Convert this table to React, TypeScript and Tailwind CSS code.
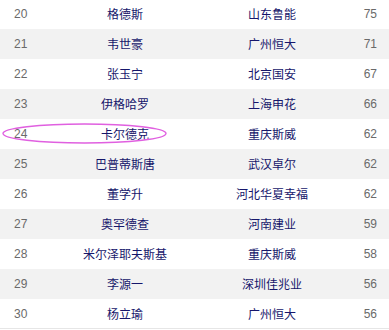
import React from "react";

const rows = [
  ["20", "格德斯", "山东鲁能", "75"],
  ["21", "韦世豪", "广州恒大", "71"],
  ["22", "张玉宁", "北京国安", "67"],
  ["23", "伊格哈罗", "上海申花", "66"],
  ["24", "卡尔德克", "重庆斯威", "62"],
  ["25", "巴普蒂斯唐", "武汉卓尔", "62"],
  ["26", "董学升", "河北华夏幸福", "62"],
  ["27", "奥罕德查", "河南建业", "59"],
  ["28", "米尔泽耶夫斯基", "重庆斯威", "58"],
  ["29", "李源一", "深圳佳兆业", "56"],
  ["30", "杨立瑜", "广州恒大", "56"],
];

export default function App() {
  return (
    <div className="relative w-[389px] h-[330px] overflow-hidden bg-white">
      <div className="-mt-px">
        {rows.map((r, i) => (
          <div
            key={r[0]}
            className={
              "grid grid-cols-[50px_150px_144px_1fr] items-center h-[30px] " +
              (i % 2 === 1 ? "bg-[#f2f2f2] " : "bg-white ") +
              (i === rows.length - 1 ? "border-b border-[#e6e6e6]" : "")
            }
          >
            <div className="pl-[14px] text-[12px] text-[#6a6a6a] [font-family:'Liberation_Sans',Arial,sans-serif]">
              {r[0]}
            </div>
            <div className="text-center text-[12px] text-[#16166b] [font-family:'Noto_Sans_CJK_SC',sans-serif] leading-none">
              {r[1]}
            </div>
            <div className="text-center text-[12px] text-[#16166b] [font-family:'Noto_Sans_CJK_SC',sans-serif] leading-none">
              {r[2]}
            </div>
            <div className="text-right pr-[12px] text-[12px] text-[#6a6a6a] [font-family:'Liberation_Sans',Arial,sans-serif]">
              {r[3]}
            </div>
          </div>
        ))}
      </div>
      <svg
        className="absolute left-0 top-0 pointer-events-none"
        width="389"
        height="330"
      >
        <ellipse
          cx="84.5"
          cy="133.5"
          rx="81.5"
          ry="9.5"
          fill="none"
          stroke="#e060e0"
          strokeWidth="1.4"
        />
      </svg>
    </div>
  );
}
